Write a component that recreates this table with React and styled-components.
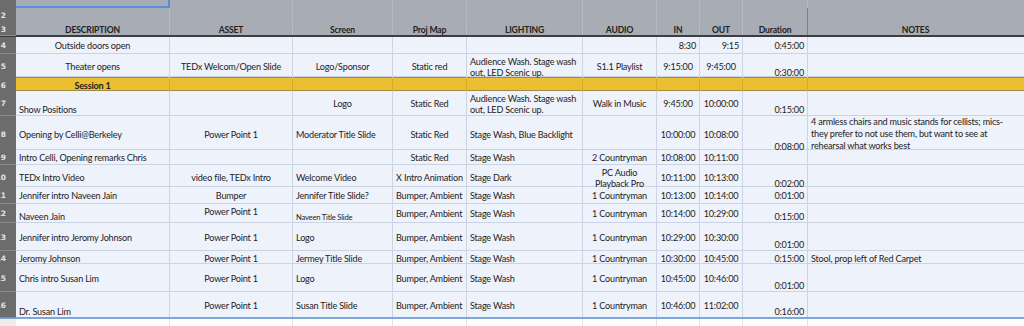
import React from 'react';
import styled, { createGlobalStyle } from 'styled-components';

const COLS = '16px 154px 123px 100px 74px 116px 74px 43px 43px 65px 1fr';

const GlobalStyle = createGlobalStyle`
  html, body {
    margin: 0;
    padding: 0;
    background: #ffffff;
    overflow: hidden;
  }
  * { box-sizing: border-box; }
`;

const Sheet = styled.div`
  width: 1024px;
  height: 326px;
  overflow: hidden;
  font-family: Lato, 'Liberation Sans', sans-serif;
  font-size: 9.1px;
  letter-spacing: -0.2px;
  color: #1d1d1d;
  background: #ffffff;
`;

const Row = styled.div`
  display: grid;
  grid-template-columns: ${COLS};
  height: ${p => p.$h}px;
  background: ${p =>
    p.$kind === 'top' || p.$kind === 'head'
      ? '#a8adb5'
      : p.$kind === 'session'
      ? '#ebbf31'
      : p.$kind === 'blank'
      ? '#ffffff'
      : '#eef2fb'};
  border-bottom: ${p =>
    p.$kind === 'head'
      ? '2px solid #3c3d40'
      : p.$kind === 'session'
      ? '1px solid #a08a45'
      : p.$kind === 'last'
      ? '2px solid #7ea6da'
      : p.$kind === 'top'
      ? 'none'
      : '1px solid #c9d3e4'};
  ${p => p.$kind === 'session' && 'border-top: 1px solid #8f8a7c;'}
`;

const RowNum = styled.div`
  background: ${p => (p.$light ? '#ececec' : '#6c6c6c')};
  border-bottom: 1px solid ${p => (p.$light ? '#dcdcdc' : '#8a8a8a')};
  color: #e4e4e4;
  font-family: 'DejaVu Sans', sans-serif;
  font-weight: bold;
  font-size: 7.5px;
  letter-spacing: 0;
  display: flex;
  align-items: center;
  justify-content: flex-end;
  padding-right: 10px;
  padding-top: 1px;
  overflow: hidden;
  white-space: nowrap;
  margin-bottom: -1px;
`;

const Cell = styled.div`
  display: flex;
  flex-direction: column;
  justify-content: ${p => (p.$v === 'top' ? 'flex-start' : p.$v === 'bottom' ? 'flex-end' : 'center')};
  text-align: ${p => p.$h};
  padding: ${p => (p.$tight ? 0 : 3)}px 3px 0 3px;
  line-height: ${p => p.$lh || 10.5}px;
  white-space: pre;
  overflow: visible;
  font-size: ${p => (p.$small ? '7.6px' : 'inherit')};
  font-weight: ${p => (p.$bold ? 'bold' : 'normal')};
  border-right: 1px solid ${p => p.$line};
  min-width: 0;
`;

const HeadCell = styled.div`
  display: flex;
  align-items: center;
  justify-content: center;
  font-weight: bold;
  font-size: 8.6px;
  letter-spacing: -0.15px;
  color: #222;
  padding-top: 2px;
  border-right: 1px solid ${p => p.$line || '#b6bac1'};
`;

const TopCell = styled.div`
  border-right: 1px solid ${p => p.$line || '#b4b8bf'};
  ${p => p.$picked && 'border: 2px solid #5b8ddb; border-top: none; border-left: none;'}
`;

// default alignment for each data column
const align = ['left', 'center', 'left', 'center', 'left', 'center', 'center', 'center', 'right', 'left'];

const headers = ['DESCRIPTION', 'ASSET', 'Screen', 'Proj Map', 'LIGHTING', 'AUDIO', 'IN', 'OUT', 'Duration', 'NOTES'];

const rows = [
  {
    n: 4, h: 17,
    c: [{ t: 'Outside doors open', h: 'center' }, {}, {}, {}, {}, {}, { t: '8:30', h: 'right' }, { t: '9:15', h: 'right' }, { t: '0:45:00', v: 'center' }, {}],
  },
  {
    n: 5, h: 23,
    c: [
      { t: 'Theater opens', h: 'center' },
      { t: 'TEDx Welcom/Open Slide' },
      { t: 'Logo/Sponsor', h: 'center' },
      { t: 'Static red' },
      { t: 'Audience Wash. Stage wash\nout, LED Scenic up.' },
      { t: 'S1.1 Playlist' },
      { t: '9:15:00' },
      { t: '9:45:00' },
      { t: '0:30:00' },
      {},
    ],
  },
  { n: 6, h: 14, kind: 'session', c: [{ t: 'Session 1', h: 'center', bold: true }, {}, {}, {}, {}, {}, {}, {}, {}, {}] },
  {
    n: 7, h: 25,
    c: [
      { t: 'Show Positions', v: 'bottom' },
      {},
      { t: 'Logo', h: 'center' },
      { t: 'Static Red' },
      { t: 'Audience Wash. Stage wash\nout, LED Scenic up.' },
      { t: 'Walk in Music' },
      { t: '9:45:00' },
      { t: '10:00:00' },
      { t: '0:15:00' },
      {},
    ],
  },
  {
    n: 8, h: 34,
    c: [
      { t: 'Opening by Celli@Berkeley' },
      { t: 'Power Point 1' },
      { t: 'Moderator Title Slide' },
      { t: 'Static Red' },
      { t: 'Stage Wash, Blue Backlight' },
      {},
      { t: '10:00:00' },
      { t: '10:08:00' },
      { t: '0:08:00' },
      {
        t: '4 armless chairs and music stands for cellists; mics-\nthey prefer to not use them, but want to see at\nrehearsal what works best',
        lh: 12,
        tight: true,
      },
    ],
  },
  {
    n: 9, h: 15,
    c: [
      { t: 'Intro Celli, Opening remarks Chris' },
      {},
      {},
      { t: 'Static Red' },
      { t: 'Stage Wash' },
      { t: '2 Countryman' },
      { t: '10:08:00' },
      { t: '10:11:00' },
      {},
      {},
    ],
  },
  {
    n: 10, h: 22,
    c: [
      { t: 'TEDx Intro Video' },
      { t: 'video file, TEDx Intro' },
      { t: 'Welcome Video' },
      { t: 'X Intro Animation' },
      { t: 'Stage Dark' },
      { t: 'PC Audio\nPlayback Pro' },
      { t: '10:11:00' },
      { t: '10:13:00' },
      { t: '0:02:00' },
      {},
    ],
  },
  {
    n: 11, h: 17,
    c: [
      { t: 'Jennifer intro Naveen Jain' },
      { t: 'Bumper' },
      { t: 'Jennifer Title Slide?' },
      { t: 'Bumper, Ambient', h: 'left' },
      { t: 'Stage Wash' },
      { t: '1 Countryman' },
      { t: '10:13:00' },
      { t: '10:14:00' },
      { t: '0:01:00', v: 'center' },
      {},
    ],
  },
  {
    n: 12, h: 19,
    c: [
      { t: 'Naveen Jain', v: 'bottom' },
      { t: 'Power Point 1', v: 'top' },
      { t: 'Naveen Title Slide', v: 'bottom', small: true },
      { t: 'Bumper, Ambient', h: 'left' },
      { t: 'Stage Wash' },
      { t: '1 Countryman' },
      { t: '10:14:00' },
      { t: '10:29:00' },
      { t: '0:15:00' },
      {},
    ],
  },
  {
    n: 13, h: 28,
    c: [
      { t: 'Jennifer intro Jeromy Johnson' },
      { t: 'Power Point 1' },
      { t: 'Logo' },
      { t: 'Bumper, Ambient', h: 'left' },
      { t: 'Stage Wash' },
      { t: '1 Countryman' },
      { t: '10:29:00' },
      { t: '10:30:00' },
      { t: '0:01:00' },
      {},
    ],
  },
  {
    n: 14, h: 13,
    c: [
      { t: 'Jeromy Johnson' },
      { t: 'Power Point 1' },
      { t: 'Jermey Title Slide' },
      { t: 'Bumper, Ambient', h: 'left' },
      { t: 'Stage Wash' },
      { t: '1 Countryman' },
      { t: '10:30:00' },
      { t: '10:45:00' },
      { t: '0:15:00', v: 'center' },
      { t: 'Stool, prop left of Red Carpet' },
    ],
  },
  {
    n: 15, h: 28,
    c: [
      { t: 'Chris intro Susan Lim' },
      { t: 'Power Point 1' },
      { t: 'Logo' },
      { t: 'Bumper, Ambient', h: 'left' },
      { t: 'Stage Wash' },
      { t: '1 Countryman' },
      { t: '10:45:00' },
      { t: '10:46:00' },
      { t: '0:01:00' },
      {},
    ],
  },
  {
    n: 16, h: 27, kind: 'last',
    c: [
      { t: 'Dr. Susan Lim', v: 'bottom' },
      { t: 'Power Point 1' },
      { t: 'Susan Title Slide' },
      { t: 'Bumper, Ambient', h: 'left' },
      { t: 'Stage Wash' },
      { t: '1 Countryman' },
      { t: '10:46:00' },
      { t: '11:02:00' },
      { t: '0:16:00' },
      {},
    ],
  },
];

function DataRow({ row }) {
  const session = row.kind === 'session';
  return (
    <Row $h={row.h} $kind={row.kind || 'data'}>
      <RowNum>{row.n}</RowNum>
      {row.c.map((cell, i) => (
        <Cell
          key={i}
          $h={cell.h || align[i]}
          $v={cell.v || (i === 8 ? 'bottom' : 'center')}
          $bold={cell.bold}
          $small={cell.small}
          $lh={cell.lh}
          $tight={cell.tight}
          $line={session ? (i === 9 ? 'transparent' : '#d6ab2c') : i === 9 ? 'transparent' : '#cad4e5'}
        >
          {cell.t}
        </Cell>
      ))}
    </Row>
  );
}

export default function App() {
  return (
    <Sheet>
      <GlobalStyle />
      <Row $h={8} $kind="top">
        <RowNum />
        {headers.map((_, i) => (
          <TopCell key={i} $picked={i === 0} $line={i === 9 ? 'transparent' : undefined} />
        ))}
      </Row>
      <Row $h={14} $kind="top">
        <RowNum>2</RowNum>
        {headers.map((_, i) => (
          <TopCell key={i} $line={i === 8 ? '#7d8087' : i === 9 ? 'transparent' : undefined} />
        ))}
      </Row>
      <Row $h={15} $kind="head">
        <RowNum>3</RowNum>
        {headers.map((label, i) => (
          <HeadCell key={label} $line={i === 8 ? '#7d8087' : i === 9 ? 'transparent' : undefined}>
            {label}
          </HeadCell>
        ))}
      </Row>
      {rows.map(row => (
        <DataRow key={row.n} row={row} />
      ))}
      <Row $h={20} $kind="blank">
        <RowNum $light />
        {headers.map((_, i) => (
          <Cell key={i} $h="left" $v="center" $line={i === 9 ? 'transparent' : '#dde3ee'} />
        ))}
      </Row>
    </Sheet>
  );
}
